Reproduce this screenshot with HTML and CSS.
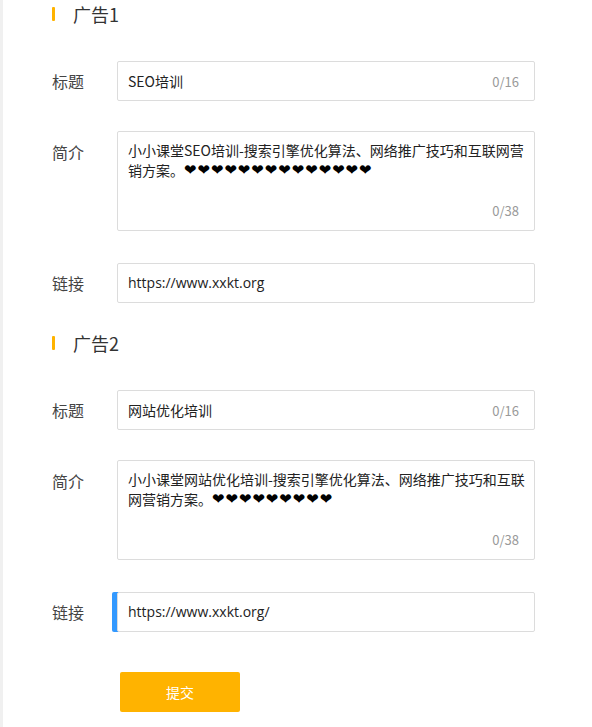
FILE: index.html
```html
<!DOCTYPE html>
<html lang="zh-CN">
<head>
<meta charset="utf-8">
<title>广告设置</title>
<link rel="stylesheet" href="styles.css">
</head>
<body>
<div class="page">
  <div class="section-title first"><span class="bar"></span><span class="title-text">广告1</span></div>
  <div class="row row-title">
    <label class="label">标题</label>
    <div class="field input"><span class="value">SEO培训</span><span class="count">0/16</span></div>
  </div>
  <div class="row row-intro">
    <label class="label">简介</label>
    <div class="field area"><div class="value">小小课堂SEO培训-搜索引擎优化算法、网络推广技巧和互联网营销方案。<span class="hearts">❤❤❤❤❤❤❤❤❤❤❤❤❤❤</span></div><span class="count">0/38</span></div>
  </div>
  <div class="row row-link">
    <label class="label">链接</label>
    <div class="field input"><span class="value link">https://www.xxkt.org</span></div>
  </div>

  <div class="section-title"><span class="bar"></span><span class="title-text">广告2</span></div>
  <div class="row row-title">
    <label class="label">标题</label>
    <div class="field input"><span class="value">网站优化培训</span><span class="count">0/16</span></div>
  </div>
  <div class="row row-intro">
    <label class="label">简介</label>
    <div class="field area"><div class="value">小小课堂网站优化培训-搜索引擎优化算法、网络推广技巧和互联网营销方案。<span class="hearts">❤❤❤❤❤❤❤❤❤</span></div><span class="count">0/38</span></div>
  </div>
  <div class="row row-link">
    <label class="label">链接</label>
    <div class="field input focused"><span class="value link">https://www.xxkt.org/</span></div>
  </div>

  <div class="actions"><button class="submit" type="button">提交</button></div>
</div>
</body>
</html>
```

FILE: styles.css
```css
html, body {
  margin: 0;
  padding: 0;
  background: #fff;
}
body {
  font-family: "Noto Sans CJK SC", "Open Sans", sans-serif;
  color: #333;
}
.page {
  border-left: 3px solid #f0f0f0;
  min-height: 727px;
  box-sizing: border-box;
  padding-left: 49px;
  width: 535px;
}
.section-title {
  display: flex;
  align-items: center;
  height: 28px;
  margin-top: 26px;
}
.section-title.first {
  margin-top: 0;
}
.bar {
  width: 3px;
  height: 14px;
  background: #ffb300;
  border-radius: 1px;
}
.title-text {
  margin-left: 18px;
  font-size: 18px;
  line-height: 28px;
  color: #333;
}
.row {
  display: flex;
  align-items: flex-start;
}
.row-title { margin-top: 33px; }
.row-intro { margin-top: 30px; }
.row-link { margin-top: 32px; }
.label {
  width: 65px;
  flex: none;
  font-size: 16px;
  line-height: 40px;
  color: #444;
}
.row-intro .label {
  line-height: 42px;
}
.field {
  position: relative;
  flex: 1;
  box-sizing: border-box;
  border: 1px solid #dcdcdc;
  border-radius: 2px;
  background: #fff;
  font-size: 14px;
  color: #222;
}
.input {
  height: 40px;
  display: flex;
  align-items: center;
  justify-content: space-between;
  padding: 0 15px 0 10px;
}
.value {
  line-height: 20px;
}
.link {
  font-size: 14px;
  font-family: "Open Sans", "Noto Sans CJK SC", sans-serif;
}
.count {
  font-size: 13px;
  color: #999;
}
.area {
  height: 100px;
  display: flex;
  flex-direction: column;
  justify-content: space-between;
  padding: 8px 7px 9px 10px;
}
.area .count {
  align-self: flex-end;
  line-height: 20px;
  margin-right: 8px;
}
.hearts {
  font-family: "DejaVu Sans", sans-serif;
  font-size: 15px;
  line-height: 20px;
  letter-spacing: 0.9px;
  vertical-align: top;
  color: #000;
}
.focused {
  box-shadow: -5px 0 0 0 #3399ff;
}
.actions {
  margin-top: 40px;
  padding-left: 68px;
}
.submit {
  width: 120px;
  height: 40px;
  border: none;
  border-radius: 2px;
  background: #ffb300;
  color: #fff;
  font-family: "Noto Sans CJK SC", sans-serif;
  font-size: 14px;
  cursor: pointer;
}
```
